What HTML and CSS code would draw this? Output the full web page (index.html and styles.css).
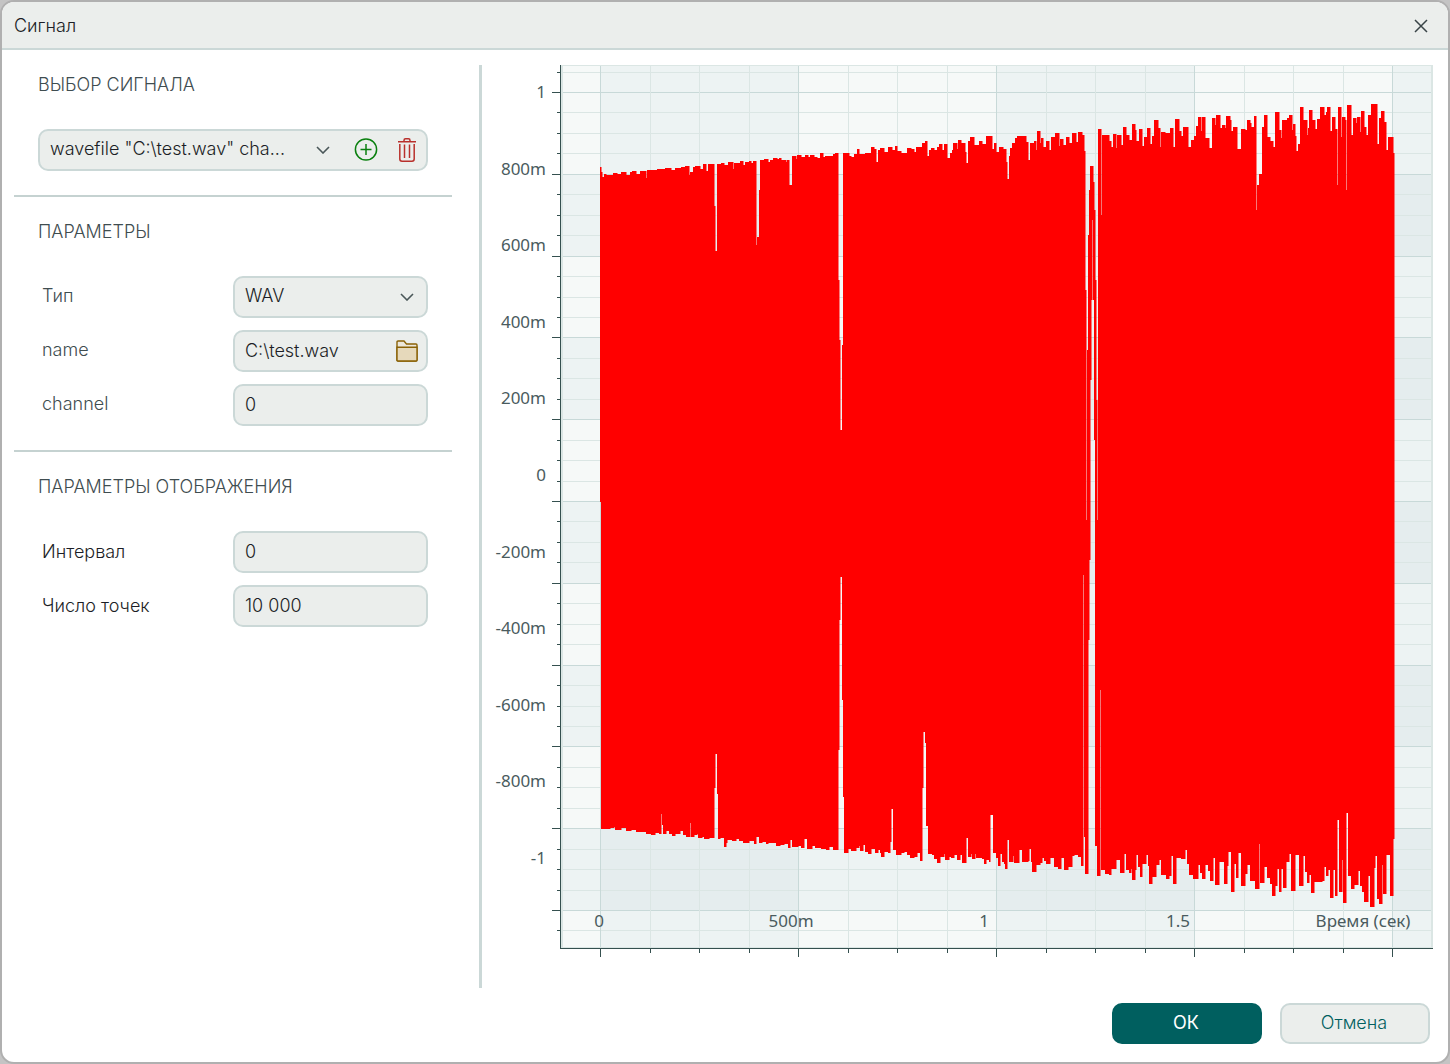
FILE: index.html
```html
<!DOCTYPE html>
<html lang="ru">
<head>
  <meta charset="UTF-8" />
  <meta name="viewport" content="width=device-width, initial-scale=1.0"/>
  <title>Сигнал</title>
  <link rel="stylesheet" href="styles.css">
</head>
<body>
  <div class="dialog" role="dialog" aria-labelledby="dialogTitle">
    <header class="titlebar">
      <h1 id="dialogTitle">Сигнал</h1>
      <button class="icon-btn" aria-label="Закрыть">
        <svg width="14" height="14" viewBox="0 0 14 14"><path d="M1 1L13 13M13 1L1 13" fill="none" stroke="#3a4548" stroke-width="1.5"/></svg>
      </button>
    </header>

    <main>
      <form class="panel" id="signalForm">
        <section>
          <h2>Выбор сигнала</h2>
          <div class="field signal-field">
            <div class="select-wrap">
              <select aria-label="Сигнал">
                <option>wavefile "C:\test.wav" cha...</option>
              </select>
              <svg class="chevron" width="14" height="8" viewBox="0 0 14 8"><path d="M1 1L7 7L13 1" fill="none" stroke="#4a5759" stroke-width="1.6"/></svg>
            </div>
            <button type="button" class="icon-btn" aria-label="Добавить">
              <svg width="24" height="24" viewBox="0 0 24 24" fill="none" stroke="#0a800f" stroke-width="1.5">
                <circle cx="12" cy="11.5" r="10.6"/>
                <path d="M12 6V17M6.5 11.5H17.5"/>
              </svg>
            </button>
            <button type="button" class="icon-btn" aria-label="Удалить">
              <svg width="18" height="24" viewBox="0 0 18 24" fill="none" stroke="#b9302c" stroke-width="1.5">
                <path d="M0 3.7H18M6 3.5V2.4Q6 0.8 7.5 0.8H10.5Q12 0.8 12 2.4V3.5"/>
                <path d="M1.8 6V21Q1.8 23.2 4 23.2H14Q16.2 23.2 16.2 21V6M6.5 6.5V20M11.5 6.5V20"/>
              </svg>
            </button>
          </div>
        </section>

        <section>
          <h2>Параметры</h2>
          <div class="row">
            <label for="type">Тип</label>
            <div class="field select-wrap">
              <select id="type"><option>WAV</option><option>Sin</option></select>
              <svg class="chevron" width="14" height="8" viewBox="0 0 14 8"><path d="M1 1L7 7L13 1" fill="none" stroke="#4a5759" stroke-width="1.6"/></svg>
            </div>
          </div>
          <div class="row">
            <label for="name">name</label>
            <div class="field">
              <input type="text" id="name" value="C:\test.wav" />
              <button type="button" class="icon-btn" aria-label="Открыть файл">
                <svg width="22" height="22" viewBox="0 0 22 22" stroke="#8a6206" stroke-width="1.4">
                  <path d="M1 20V2Q1 1 2 1H8L10.5 4H20Q21 4 21 5V20Q21 21 20 21H2Q1 21 1 20Z" fill="#ece7da"/>
                  <path d="M1 7.2H21V20Q21 21 20 21H2Q1 21 1 20Z" fill="#e6d9bb"/>
                </svg>
              </button>
            </div>
          </div>
          <div class="row">
            <label for="channel">channel</label>
            <div class="field"><input type="text" id="channel" value="0" /></div>
          </div>
        </section>

        <section class="display-params">
          <h2>Параметры отображения</h2>
          <div class="row">
            <label for="interval">Интервал</label>
            <div class="field"><input type="text" id="interval" value="0" /></div>
          </div>
          <div class="row">
            <label for="points">Число точек</label>
            <div class="field"><input type="text" id="points" value="10 000" /></div>
          </div>
        </section>
      </form>

      <div class="chart">
        <svg id="plot" viewBox="0 0 951 923" role="img" aria-label="График сигнала">
          <g id="bands"></g>
          <g id="grid"></g>
          <g id="wave"></g>
          <g id="axes"></g>
          <g id="labels"></g>
        </svg>
      </div>
    </main>

    <footer>
      <button type="submit" form="signalForm" class="btn btn-primary">ОК</button>
      <button type="button" class="btn">Отмена</button>
    </footer>
  </div>
  <script src="chart.js"></script>
</body>
</html>
```
FILE: styles.css
```css
:root {
  --line: #cbd8d7;
  --field-bg: #ebeeec;
  --text: #1c1e26;
  --muted: #3f4d50;
  --accent: #005f5f;
}
* { box-sizing: border-box; }
body {
  margin: 0; background: #c4c4c4; color: var(--text);
  font: 350 18px/24px Inter, "Noto Sans", sans-serif;
}
button, input, select { font: inherit; color: inherit; }
h1, h2 { margin: 0; font-size: 18px; font-weight: inherit; }

.dialog {
  min-height: 100vh; display: flex; flex-direction: column;
  background: #fff; border: 2px solid #b0b0b0; border-radius: 14px; overflow: hidden;
}
.titlebar {
  display: flex; justify-content: space-between; align-items: center; height: 48px;
  padding: 2px 20px 0 12px; background: var(--field-bg); border-bottom: 2px solid var(--line);
}
.icon-btn {
  display: flex; flex-shrink: 0; padding: 0; border: none; background: none; cursor: pointer;
}

main { flex-grow: 1; display: flex; gap: 27px; padding: 15px 15px 0 12px; }
.panel { width: 438px; flex-shrink: 0; padding-top: 8px; }
.panel section { padding: 0 24px; }
.panel section + section { margin-top: 24px; padding-top: 23px; border-top: 2px solid #c5d2d1; }
.panel h2 { margin-bottom: 32px; text-transform: uppercase; color: var(--muted); }

.row { display: grid; grid-template-columns: 1fr 195px; align-items: center; }
.row + .row { margin-top: 12px; }
.row label { padding: 0 0 2px 4px; color: var(--muted); }
.display-params label { padding-bottom: 0; color: var(--text); }

.field {
  display: flex; align-items: center; height: 42px; padding: 0 8px 0 10px;
  background: var(--field-bg); border: 2px solid var(--line); border-radius: 10px;
}
.field input, .field select {
  width: 100%; min-width: 0; padding: 0; border: none; outline: none; background: none; appearance: none;
}
.field select { padding-bottom: 2px; }
.select-wrap { display: flex; align-items: center; flex-grow: 1; }
.select-wrap .chevron { flex-shrink: 0; margin-right: 4px; pointer-events: none; }
.signal-field { gap: 20px; padding-right: 10px; }

.chart { flex: 1; min-width: 0; border-left: 3px solid var(--line); }
.chart svg { display: block; width: 100%; height: auto; }
.chart text { font: 400 17px "Noto Sans", "Open Sans", sans-serif; fill: #4a5b5e; }

footer { display: flex; justify-content: flex-end; gap: 18px; padding: 15px 18px 18px; }
.btn {
  width: 150px; height: 41px; padding: 0 2px 2px 0; border: 2px solid var(--line); border-radius: 10px;
  background: var(--field-bg); color: var(--accent); cursor: pointer;
}
.btn-primary { background: var(--accent); border-color: var(--accent); color: #fff; font-weight: 400; }
```
FILE: chart.js
```js
// plot area inside the svg
const area = { left: 79, right: 951, top: 0, bottom: 883 };
const SVG = 'http://www.w3.org/2000/svg';

// envelope samples "x:y", every value holds until the next x
const upper = `600:167 601:172 602:177 604:174 606:175 613:173 617:174 621:172 626:175 630:172 632:171 636:174 640:171
646:178 647:170 657:169 665:168 671:170 675:168 681:167 685:166 689:175 690:172 693:167 695:166 700:169 703:164 706:171
708:164 714:206 715:251 717:164 721:163 724:165 728:162 733:169 734:163 740:161 743:165 745:162 749:161 751:163 753:161
756:245 757:237 759:190 760:160 764:159 768:162 770:160 773:158 777:159 779:158 781:160 786:162 787:160 789:185 792:156
796:159 797:155 801:157 805:155 808:157 810:155 814:157 817:158 820:153 823:157 825:156 833:154 835:153 838:280 839:340
840:430 842:345 843:153 849:156 851:157 854:154 857:149 859:154 865:153 871:147 874:149 876:162 878:150 880:148 884:152
888:147 892:150 895:146 897:151 901:153 907:148 911:149 914:152 916:147 922:143 925:141 927:156 929:150 931:148 934:150
937:147 939:144 942:150 944:144 947:158 950:153 952:150 953:143 957:149 958:140 961:143 965:152 966:163 968:141 970:137
974:145 979:141 982:144 986:136 992:149 994:143 996:152 999:147 1003:149 1006:162 1007:179 1009:156 1010:148 1012:143
1015:138 1017:136 1026:142 1028:160 1030:143 1034:141 1036:150 1037:131 1040:143 1041:138 1043:147 1046:141 1049:150
1051:137 1055:133 1059:146 1060:139 1063:145 1066:137 1069:143 1072:133 1076:142 1078:132 1082:135 1084:151 1085:290
1086:520 1087:350 1088:235 1089:190 1090:166 1093:182 1094:210 1095:280 1096:400 1097:520 1098:129 1101:215 1102:135
1109:141 1111:147 1113:134 1116:148 1117:135 1121:145 1123:127 1126:135 1129:140 1132:124 1135:130 1136:141 1139:129
1142:146 1144:137 1147:128 1150:144 1152:136 1154:120 1158:128 1160:147 1161:132 1165:133 1170:128 1173:147 1175:119
1179:131 1181:136 1183:127 1188:147 1191:140 1194:136 1196:126 1198:117 1201:131 1202:117 1205:138 1209:148 1212:118
1215:125 1216:115 1220:128 1222:125 1225:128 1226:116 1230:120 1231:131 1233:127 1237:149 1241:129 1245:130 1247:120
1250:123 1251:127 1254:116 1256:210 1257:185 1259:174 1262:127 1264:115 1267:137 1270:141 1273:147 1275:112 1279:130
1281:138 1282:120 1287:118 1289:115 1292:130 1293:124 1295:136 1296:151 1298:144 1300:107 1303:120 1307:135 1308:128
1309:110 1312:120 1315:129 1317:119 1320:107 1324:115 1326:112 1327:107 1330:131 1332:117 1335:129 1337:185 1338:107
1341:137 1342:117 1345:120 1346:190 1347:105 1351:135 1353:118 1356:123 1357:117 1360:132 1361:111 1364:127 1366:135
1368:115 1371:104 1377:144 1379:118 1381:111 1384:122 1386:150 1388:137 1393:153 1394:153`;

const lower = `600:502 601:829 610:828 614:827 615:830 621:828 626:831 631:830 636:832 646:834 651:835 655:833 659:834 661:814
662:825 663:834 666:831 669:834 672:836 675:834 680:831 683:835 686:837 690:823 691:837 694:835 697:834 698:838 702:837
704:839 709:838 714:788 715:754 717:794 718:839 720:838 724:847 726:843 727:840 732:841 736:839 739:841 743:843 749:841
754:844 756:837 759:843 762:842 766:844 768:843 776:846 780:845 784:844 788:848 790:840 792:847 798:846 801:848 804:839
807:849 812:846 815:848 821:849 826:850 829:847 833:850 838:750 839:620 840:577 842:700 843:797 844:853 848:849 851:851
856:848 859:846 860:851 863:845 865:852 868:854 871:849 875:853 878:850 880:853 881:857 884:852 888:853 890:842 891:809
893:850 896:855 901:853 904:852 907:855 910:858 914:857 917:853 920:861 922:788 923:732 925:743 926:826 928:854 932:855
934:859 937:863 940:857 944:854 945:860 949:857 951:858 954:855 957:860 960:855 962:863 966:838 968:857 971:854 972:859
975:854 976:858 982:859 984:864 986:860 989:862 990:815 993:853 996:858 998:866 1000:854 1002:862 1004:864 1005:869
1007:840 1009:862 1013:856 1014:863 1019:850 1022:862 1028:861 1029:849 1031:862 1032:872 1036:865 1040:863 1042:858
1044:861 1046:864 1050:858 1054:867 1058:869 1061:858 1064:870 1068:867 1072:856 1074:855 1078:857 1081:866 1083:575
1084:837 1085:874 1088:640 1089:560 1090:380 1091:300 1092:220 1093:300 1094:440 1095:846 1097:876 1100:690 1101:870 1105:874
1109:875 1111:869 1116:860 1120:873 1124:854 1126:870 1129:873 1131:869 1132:880 1135:870 1136:855 1138:867 1140:877
1142:864 1146:855 1148:866 1149:884 1152:877 1156:865 1159:860 1161:875 1166:879 1169:876 1171:856 1173:884 1176:858
1181:859 1185:850 1187:864 1189:875 1193:879 1198:865 1200:873 1202:879 1205:865 1208:871 1210:881 1213:858 1215:885
1219:862 1224:884 1227:866 1228:852 1231:892 1234:864 1236:878 1238:853 1241:886 1245:874 1247:865 1250:881 1255:889
1259:844 1260:883 1264:867 1267:878 1270:884 1272:896 1275:886 1277:869 1279:892 1281:869 1283:888 1286:862 1289:854
1291:891 1295:855 1299:886 1303:856 1305:872 1307:883 1309:875 1311:893 1314:882 1322:881 1324:867 1326:876 1328:870
1330:898 1333:870 1335:896 1337:820 1339:892 1342:860 1343:903 1346:813 1348:876 1351:889 1354:885 1358:871 1360:886
1362:892 1364:902 1368:876 1370:907 1374:868 1375:856 1377:899 1379:904 1382:865 1383:894 1386:855 1390:896 1393:839
1394:839`;

// samples are stored in window units, shift them to the svg origin
const origin = { x: 482, y: 65 };
const parse = (s) => s.trim().split(/\s+/).map((p) => {
  const [x, y] = p.split(':').map(Number);
  return [x - origin.x, y - origin.y];
});

function add(parent, tag, attrs, text) {
  const el = document.createElementNS(SVG, tag);
  for (const key in attrs) el.setAttribute(key, attrs[key]);
  if (text) el.textContent = text;
  document.getElementById(parent).appendChild(el);
}
const rect = (parent, x, y, width, height, fill) => add(parent, 'rect', { x, y, width, height, fill });

// background bands
const band = 'rgba(190,208,214,0.15)';
const rowY = (i) => Math.round(27 + i * 81.8);
const colX = (i) => 118 + i * 198;
const w = area.right - area.left;
rect('bands', area.left, 0, w, area.bottom, '#f6f9f8');
for (let i = 1; i < 10; i += 2) rect('bands', area.left, rowY(i), w, rowY(i + 1) - rowY(i), band);
for (let i = 0; i < 5; i += 2) {
  rect('bands', colX(i), 0, Math.min(198, area.right - colX(i)), area.bottom, band);
}

// grid lines with ticks, four minor steps in each major one
for (let i = -1; i <= 41; i++) {
  const y = Math.round(27 + i * 20.45);
  const major = i % 4 === 0;
  rect('grid', area.left, y, w, 1, major ? '#c8d9d8' : '#dbe6e4');
  rect('axes', area.left - (major ? 9 : 4), y, major ? 9 : 4, 1, '#35504f');
}
for (let i = 0; i <= 16; i++) {
  const x = Math.round(118 + i * 49.5);
  const major = i % 4 === 0;
  rect('grid', x, 0, 1, area.bottom, major ? '#c8d9d8' : '#dbe6e4');
  rect('axes', x, area.bottom, 1, major ? 9 : 5, '#35504f');
}
rect('grid', area.left, 0, w, 1, '#dbe6e4');
rect('grid', area.left, 0, 2, area.bottom, '#dbe6e4');
rect('grid', area.right - 2, 0, 2, area.bottom, '#dbe6e4');
rect('grid', area.left, area.bottom - 1, w, 1, '#dbe6e4');
rect('axes', area.left - 1, 0, 1, area.bottom + 1, '#35504f');
rect('axes', area.left - 1, area.bottom, w + 1, 1, '#35504f');

// signal: forward along the top, back along the bottom
const top_ = parse(upper);
const bottom_ = parse(lower);
let d = `M${top_[0]}`;
top_.forEach(([x, y]) => { d += `H${x}V${y}`; });
bottom_.reverse().forEach(([x, y]) => { d += `V${y}H${x}`; });
d += 'Z';
add('wave', 'path', { d, fill: '#f00', opacity: 0.5, transform: 'translate(1 0)' });
add('wave', 'path', { d, fill: '#f00' });

['1', '800m', '600m', '400m', '200m', '0', '-200m', '-400m', '-600m', '-800m', '-1'].forEach((t, i) => {
  add('labels', 'text', { x: 64, y: Math.round(33 + i * 76.6), 'text-anchor': 'end' }, t);
});
[[117, '0'], [309, '500m'], [502, '1'], [696, '1.5'], [881, 'Время (сек)']].forEach(([x, t]) => {
  add('labels', 'text', { x, y: 862, 'text-anchor': 'middle' }, t);
});
```
